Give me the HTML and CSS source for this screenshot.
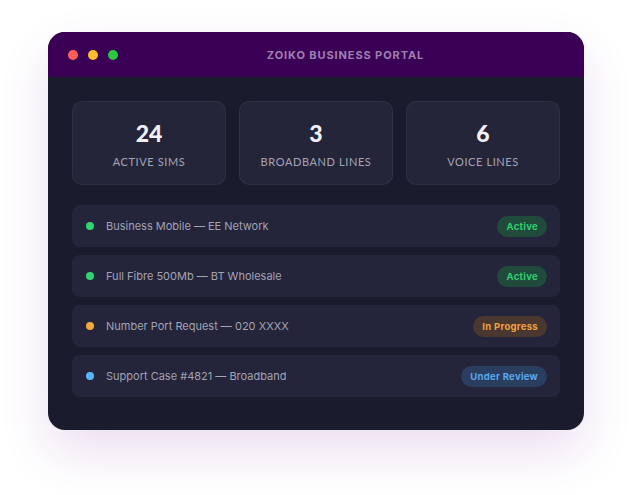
FILE: index.html
```html
<!DOCTYPE html>
<html lang="en">
<head>
<meta charset="utf-8">
<title>Zoiko Business Portal</title>
<link rel="stylesheet" href="styles.css">
</head>
<body>
<div class="window">
  <div class="titlebar">
    <div class="dots">
      <span class="dot red"></span>
      <span class="dot yellow"></span>
      <span class="dot green"></span>
    </div>
    <div class="title">ZOIKO BUSINESS PORTAL</div>
  </div>
  <div class="content">
    <div class="stats">
      <div class="stat"><div class="num">24</div><div class="label">ACTIVE SIMS</div></div>
      <div class="stat"><div class="num">3</div><div class="label">BROADBAND LINES</div></div>
      <div class="stat"><div class="num">6</div><div class="label">VOICE LINES</div></div>
    </div>
    <div class="list">
      <div class="row"><span class="bullet g"></span><span class="text">Business Mobile — EE Network</span><span class="badge active">Active</span></div>
      <div class="row"><span class="bullet g"></span><span class="text">Full Fibre 500Mb — BT Wholesale</span><span class="badge active">Active</span></div>
      <div class="row"><span class="bullet o"></span><span class="text">Number Port Request — 020 XXXX</span><span class="badge progress">In Progress</span></div>
      <div class="row"><span class="bullet b"></span><span class="text">Support Case #4821 — Broadband</span><span class="badge review">Under Review</span></div>
    </div>
  </div>
</div>
</body>
</html>
```
FILE: styles.css
```css
html {
  height: 100%;
  background: #ffffff;
}
body {
  margin: 0;
  min-height: 100%;
  box-sizing: border-box;
  padding: 32px 48px;
  font-family: Inter, "Noto Sans", sans-serif;
  background: #ffffff;
}
.window {
  width: 536px;
  border-radius: 17px;
  overflow: hidden;
  background: #1b1b2e;
  box-shadow: 0 22px 50px rgba(110, 30, 150, 0.14);
}
.titlebar {
  height: 45px;
  background: #3a0056;
  display: flex;
  align-items: center;
  padding: 0 20px;
}
.dots {
  display: flex;
  gap: 10px;
}
.dot {
  width: 10px;
  height: 10px;
  border-radius: 50%;
}
.dot.red { background: #ff5f57; }
.dot.yellow { background: #febc2e; }
.dot.green { background: #28c840; }
.title {
  flex: 1;
  margin-left: 9px;
  text-align: center;
  color: #a07fb0;
  font-size: 11px;
  font-weight: 700;
  letter-spacing: 0.9px;
}
.content {
  padding: 24px 24px 33px;
}
.stats {
  display: grid;
  grid-template-columns: repeat(3, 1fr);
  gap: 13px;
}
.stat {
  height: 84px;
  box-sizing: border-box;
  background: #25253a;
  border: 1px solid rgba(255, 255, 255, 0.05);
  border-radius: 10px;
  display: flex;
  flex-direction: column;
  align-items: center;
  justify-content: center;
}
.num {
  font-family: Lato, sans-serif;
  font-weight: 900;
  font-size: 23px;
  line-height: 26px;
  color: #f3f0fa;
  margin-top: 2px;
}
.label {
  font-family: Lato, sans-serif;
  font-size: 11px;
  letter-spacing: 0.6px;
  color: #a4a4b8;
  margin-top: 9px;
}
.list {
  margin-top: 20px;
  display: flex;
  flex-direction: column;
  gap: 8px;
}
.row {
  height: 42px;
  background: #24243a;
  border-radius: 8px;
  display: flex;
  align-items: center;
  padding: 0 13px 0 14px;
}
.bullet {
  width: 8px;
  height: 8px;
  border-radius: 50%;
  margin-right: 12px;
}
.bullet.g { background: #2fd571; }
.bullet.o { background: #f6a83f; }
.bullet.b { background: #5ab4fa; }
.text {
  flex: 1;
  font-size: 11px;
  color: #a3a3b5;
}
.badge {
  height: 21px;
  line-height: 21px;
  border-radius: 11px;
  padding: 0 9px;
  font-size: 9.5px;
  font-weight: 700;
  letter-spacing: 0.3px;
}
.badge.active { background: #1f4a3c; color: #2fcf6e; }
.badge.progress { background: #4a3830; color: #f0a040; }
.badge.review { background: #2a3e60; color: #5aa9ec; }
```
